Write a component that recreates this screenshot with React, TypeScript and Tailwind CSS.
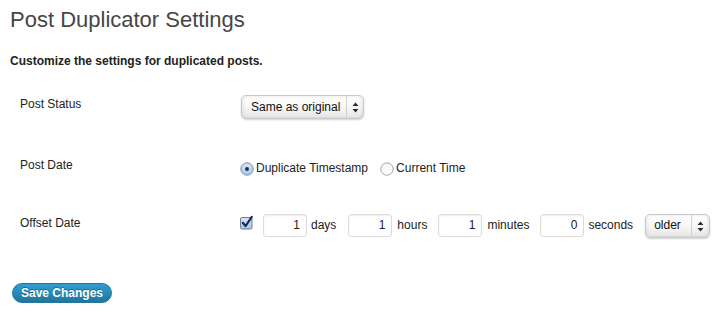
import React from "react";

function Arrows() {
  return (
    <svg width="7" height="11" viewBox="0 0 7 11" className="block">
      <path d="M3.5 0.5 L6.5 4 L0.5 4 Z" fill="#2a2a2a" />
      <path d="M3.5 10.5 L6.5 7 L0.5 7 Z" fill="#2a2a2a" />
    </svg>
  );
}

function Radio({ checked }: { checked?: boolean }) {
  return (
    <svg width="14" height="14" viewBox="0 0 14 14" className="block">
      <defs>
        <linearGradient id={checked ? "rg1" : "rg0"} x1="0" y1="0" x2="0" y2="1">
          <stop offset="0" stopColor={checked ? "#d6e6f5" : "#f4f4f4"} />
          <stop offset="1" stopColor={checked ? "#a9c7e6" : "#ffffff"} />
        </linearGradient>
      </defs>
      <circle cx="7" cy="7" r="6.2" fill={`url(#${checked ? "rg1" : "rg0"})`} stroke={checked ? "#6d86a3" : "#9a9a9a"} strokeWidth="0.9" />
      {checked && <circle cx="7" cy="7" r="1.9" fill="#1d2f4a" />}
    </svg>
  );
}

function Checkbox() {
  return (
    <svg width="15" height="15" viewBox="0 0 15 15" className="block">
      <defs>
        <linearGradient id="cb" x1="0" y1="0" x2="0" y2="1">
          <stop offset="0" stopColor="#dbe7f4" />
          <stop offset="1" stopColor="#a8c3e2" />
        </linearGradient>
      </defs>
      <rect x="0.5" y="2.5" width="11.5" height="11.5" rx="1.5" fill="url(#cb)" stroke="#5f7390" strokeWidth="0.9" />
      <path d="M2.8 7.8 L5.6 11 L11.8 1.8" fill="none" stroke="#14285a" strokeWidth="2.2" strokeLinecap="round" strokeLinejoin="round" />
    </svg>
  );
}

function Select({ label, textW, h, lead }: { label: string; textW: string; h: string; lead: string }) {
  return (
    <div
      className={`flex ${h} items-stretch rounded-[5px] border border-[#c9c9c9] bg-gradient-to-b from-[#fefefe] via-[#f7f7f7] to-[#e6e6e6] shadow-[0_1px_2px_rgba(0,0,0,0.18),inset_2px_0_3px_rgba(0,0,0,0.06),inset_-2px_0_3px_rgba(0,0,0,0.06)]`}
    >
      <div className={`${textW} ${lead} text-[12px] text-[#111]`}>{label}</div>
      <div className="w-px bg-[#d2d2d2]" />
      <div className="flex flex-1 items-center justify-center">
        <Arrows />
      </div>
    </div>
  );
}

function NumBox({ v }: { v: string }) {
  return (
    <div className="h-[23px] w-[44px] rounded-[3px] border border-[#dcdcdc] bg-white pr-[6px] text-right text-[12px] leading-[20px] text-[#222] shadow-[inset_0_1px_2px_rgba(0,0,0,0.07)]">
      {v}
    </div>
  );
}

export default function App() {
  return (
    <div className="h-[323px] w-[723px] overflow-hidden bg-white font-['Liberation_Sans',Arial,sans-serif] text-[#222]">
      <h1 className="pl-[10px] pt-[7px] text-[22px] font-normal leading-[26px] text-[#464646]">
        Post Duplicator Settings
      </h1>
      <p className="mt-[20px] pl-[10px] text-[12px] font-bold leading-4 text-[#222]">
        Customize the settings for duplicated posts.
      </p>

      {/* Post Status */}
      <div className="mt-[26px] flex items-start">
        <div className="w-[241px] pl-[20px] pt-[1px] text-[12px] leading-4">Post Status</div>
        <div className="w-[123px]">
          <Select label="Same as original" textW="w-[104px] pl-[9px]" h="h-[24px]" lead="leading-[22px]" />
        </div>
      </div>

      {/* Post Date */}
      <div className="mt-[38px] flex items-start">
        <div className="w-[240px] pl-[20px] text-[12px] leading-4">Post Date</div>
        <div className="mt-[2px] flex items-center text-[12px] leading-4">
          <div className="mt-[3px]">
            <Radio checked />
          </div>
          <span className="ml-[2px]">Duplicate Timestamp</span>
          <div className="ml-[12px] mt-[3px]">
            <Radio />
          </div>
          <span className="ml-[2px]">Current Time</span>
        </div>
      </div>

      {/* Offset Date */}
      <div className="mt-[38px] flex items-start">
        <div className="w-[240px] pl-[20px] pt-[1px] text-[12px] leading-4">Offset Date</div>
        <div className="flex items-start text-[12px]">
          <div className="mt-[1px]">
            <Checkbox />
          </div>
          <div className="ml-[8px]">
            <NumBox v="1" />
          </div>
          <span className="ml-[4px] h-[23px] leading-[22px]">days</span>
          <div className="ml-[12px]">
            <NumBox v="1" />
          </div>
          <span className="ml-[5px] h-[23px] leading-[22px]">hours</span>
          <div className="ml-[11px]">
            <NumBox v="1" />
          </div>
          <span className="ml-[5px] h-[23px] leading-[22px]">minutes</span>
          <div className="ml-[11px]">
            <NumBox v="0" />
          </div>
          <span className="ml-[4px] h-[23px] leading-[22px]">seconds</span>
          <div className="ml-[12px] w-[65px]">
            <Select label="older" textW="w-[45px] pl-[8px]" h="h-[24px]" lead="leading-[20px]" />
          </div>
        </div>
      </div>

      <div className="mt-[45px] pl-[12px]">
        <div className="flex h-[20px] w-[100px] items-center justify-center rounded-full border border-[#21759b] bg-gradient-to-b from-[#2e9fd2] to-[#21759b] text-[12px] font-bold leading-none text-white [text-shadow:0_-1px_0_rgba(0,0,0,0.3)]">
          Save Changes
        </div>
      </div>
    </div>
  );
}
